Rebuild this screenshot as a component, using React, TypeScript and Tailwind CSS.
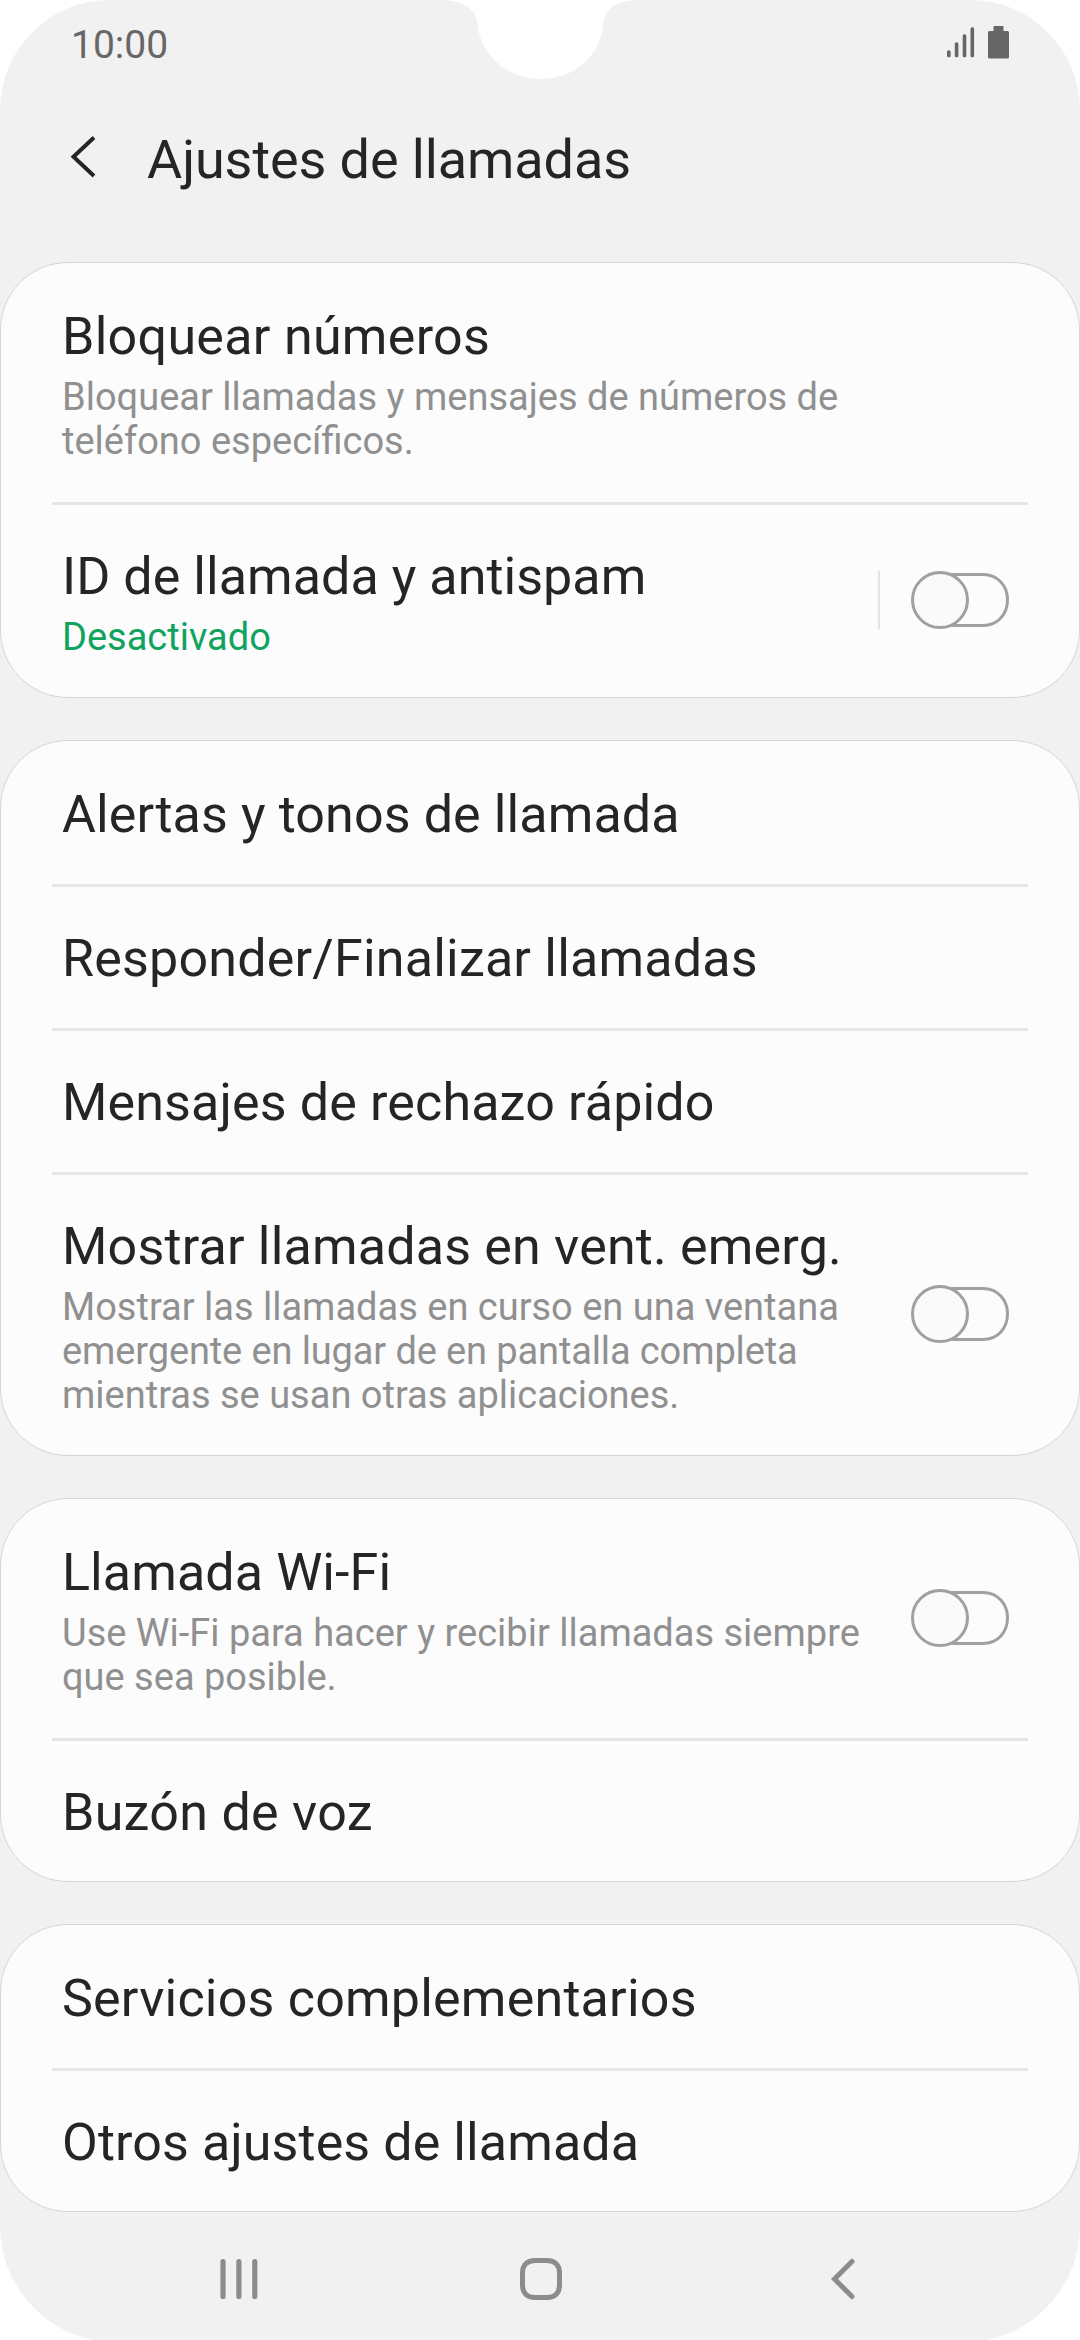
import React from "react";

function Toggle({ divider = false, raised = false }: { divider?: boolean; raised?: boolean }) {
  return (
    <div className={"flex shrink-0 items-center self-center " + (raised ? "mb-[4px]" : "")}>
      {divider && <div className="mr-[31px] h-[58px] w-[2px] bg-[#e4e4e4]" />}
      <svg width="98" height="58" viewBox="0 0 98 58" fill="none" stroke="#a0a0a0" strokeWidth="3">
        <path d="M29 3.5H72C87 3.5 96.5 15 96.5 29S87 54.5 72 54.5H29" />
        <circle cx="29" cy="29" r="27.5" fill="#fafafa" />
      </svg>
    </div>
  );
}

function Card({ className, children }: { className: string; children: React.ReactNode }) {
  return (
    <section className={"rounded-[68px] border border-[#d5d5d5] bg-[#fcfcfc] px-[51px] " + className}>{children}</section>
  );
}

interface RowProps {
  className: string;
  title: string;
  tracking: string;
  sub?: React.ReactNode[];
  green?: boolean;
  toggle?: boolean;
  divider?: boolean;
  first?: boolean;
}

function Row({ className, title, tracking, sub, green, toggle, divider, first }: RowProps) {
  return (
    <div className={"flex items-start justify-between pl-[10px] pr-[19px] " + (first ? "pt-[2px] " : "") + className}>
      <div className="pt-[42px]">
        <h2 className={"whitespace-nowrap text-[52px] leading-[60px] text-[#252525] " + tracking}>{title}</h2>
        {sub && (
          <p className={"whitespace-nowrap pt-[8px] text-[38px] leading-[44px] " + (green ? "text-[#0fa35f]" : "text-[#909090]")}>
            {sub.map((s, i) => <span key={i} className="block">{s}</span>)}
          </p>
        )}
      </div>
      {toggle && <Toggle divider={divider} raised={first} />}
    </div>
  );
}

const LINE = "border-b-[3px] border-[#e5e5e5] ";

export default function App() {
  return (
    <div className="h-[2340px] w-[1080px] overflow-hidden bg-white font-[Roboto,sans-serif]">
      <div className="relative flex h-[2342px] flex-col rounded-t-[110px] rounded-b-[116px] bg-[#f1f1f1]">
        <svg className="absolute left-[440px] top-0" width="200" height="80" viewBox="440 0 200 80" fill="#fff">
          <path d="M445 0C464 2 476 9 477.500 23C480 55 507 79 541 79S601 55 603.500 23C605 8 615 2 635 0Z" />
        </svg>
        <header className="flex h-[88px] items-start justify-between pl-[71px] pr-[71px] text-[#666]">
          <span className="pt-[22px] text-[39px] leading-[46px]">10:00</span>
          <svg className="mt-[26px]" width="62" height="33" viewBox="0 0 62 33" fill="currentColor">
            <rect x="0" y="24.300" width="3.600" height="7" rx="1.500" />
            <rect x="7.800" y="16.300" width="3.600" height="15" rx="1.500" />
            <rect x="15.700" y="8.300" width="3.600" height="23" rx="1.500" />
            <rect x="23.500" y="1.200" width="3.600" height="30.100" rx="1.500" />
            <path d="M47.500 0h8q1 0 1 1v4h4q1.500 0 1.500 1.500v24.500q0 1.500-1.500 1.500h-18q-1.500 0-1.500-1.500v-24.500q0-1.500 1.500-1.500h4v-4q0-1 1-1z" />
          </svg>
        </header>
        <div className="flex h-[174px] items-start pl-[70px]">
          <svg className="mt-[47px]" width="26" height="44" viewBox="0 0 26 44" fill="none" stroke="#252525" strokeWidth="4"><path d="M24 2.500L3.500 21.700L24 41" /></svg>
          <h1 className="ml-[51px] mt-[39px] text-[54px] leading-[66px] tracking-[-0.1px] text-[#252525]">Ajustes de llamadas</h1>
        </div>
        <main className="flex flex-col gap-[42px]">
          <Card className="h-[436px]">
            <Row first className={LINE + "h-[242px]"} tracking="tracking-[0.29px]" title="Bloquear números" sub={["Bloquear llamadas y mensajes de números de", "teléfono específicos."]} />
            <Row className="h-[190px]" tracking="tracking-[0.055px]" title="ID de llamada y antispam" sub={["Desactivado"]} green toggle divider />
          </Card>
          <Card className="h-[716px]">
            <Row first className={LINE + "h-[146px]"} tracking="tracking-[0.115px]" title="Alertas y tonos de llamada" />
            <Row className={LINE + "h-[144px]"} tracking="tracking-[0.2px]" title="Responder/Finalizar llamadas" />
            <Row className={LINE + "h-[144px]"} tracking="tracking-[0.14px]" title="Mensajes de rechazo rápido" />
            <Row className="h-[278px]" tracking="tracking-[0.19px]" title="Mostrar llamadas en vent. emerg." sub={["Mostrar las llamadas en curso en una ventana", <span className="tracking-[-0.12px]">emergente en lugar de en pantalla completa</span>, "mientras se usan otras aplicaciones."]} toggle />
          </Card>
          <Card className="h-[384px]">
            <Row first className={LINE + "h-[242px]"} tracking="tracking-[0.1px]" title="Llamada Wi-Fi" sub={["Use Wi-Fi para hacer y recibir llamadas siempre", "que sea posible."]} toggle />
            <Row className="h-[140px]" tracking="tracking-[0.28px]" title="Buzón de voz" />
          </Card>
          <Card className="h-[288px]">
            <Row first className={LINE + "h-[146px]"} tracking="tracking-[0.21px]" title="Servicios complementarios" />
            <Row className="h-[140px]" tracking="tracking-[0.1px]" title="Otros ajustes de llamada" />
          </Card>
        </main>
        <nav className="grid h-[128px] grid-cols-[42px_42px_24px] content-start justify-start gap-x-[258px] pl-[220px] pt-[46px] text-[#8c8c8c]">
          <svg width="42" height="42" viewBox="0 0 42 42" fill="none" stroke="currentColor" strokeWidth="5.200" strokeLinecap="round"><path d="M3 3.500v35M18.900 3.500v35M34.800 3.500v35" /></svg>
          <svg width="42" height="42" viewBox="0 0 42 42" fill="none" stroke="currentColor" strokeWidth="5"><path d="M15 2.500H27C35 2.500 39.500 7 39.500 15V27C39.500 35 35 39.500 27 39.500H15C7 39.500 2.500 35 2.500 27V15C2.500 7 7 2.500 15 2.500Z" /></svg>
          <svg className="ml-[11px]" width="24" height="42" viewBox="0 0 24 42" fill="none" stroke="currentColor" strokeWidth="5" strokeLinecap="round"><path d="M21 3.500L3.500 21L21 38.500" /></svg>
        </nav>
      </div>
    </div>
  );
}
